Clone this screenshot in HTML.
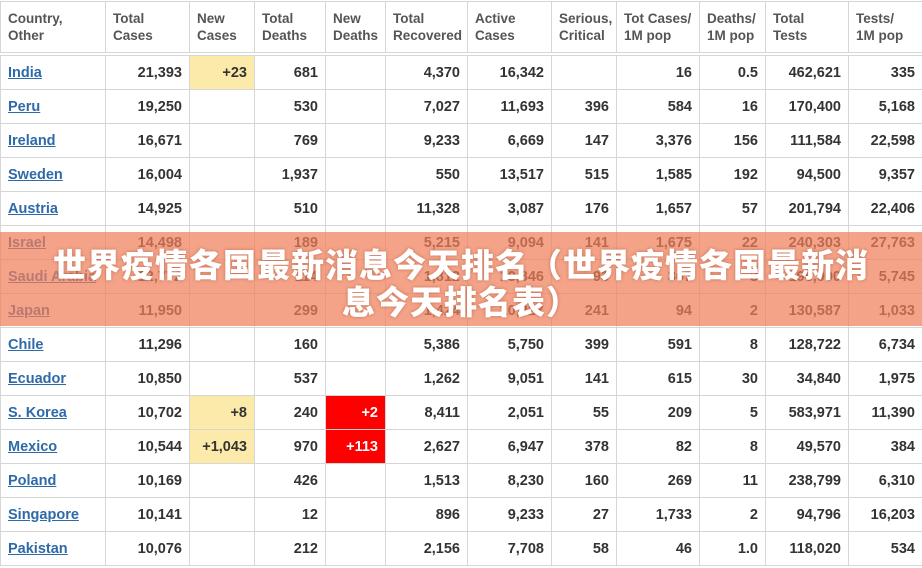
<!DOCTYPE html><html><head><meta charset="utf-8"><style>
body{margin:0;width:922px;height:568px;overflow:hidden;background:#fff;font-family:"Liberation Sans",sans-serif;position:relative}
table{position:absolute;left:0;top:1px;border-collapse:collapse;table-layout:fixed;width:922px}
td{border:1px solid #d6d6d6;height:33px;padding:0 7px 0 0;text-align:right;font-size:14.5px;font-weight:bold;color:#333;white-space:nowrap;overflow:hidden}
td:first-child{text-align:left;padding-left:7px}
tr.h td{height:50px;text-align:left;padding-left:7px;vertical-align:middle;font-size:13.5px;color:#555;line-height:17px;border-bottom:4px double #d6d6d6}
a{color:#2e6aa8;text-decoration:underline}
.y{background:#fbeaa9}.r{background:#f00;color:#fff}
.ban{position:absolute;left:0;top:232px;width:922px;height:94px;background:rgba(240,128,90,0.72);color:#fff;font-family:"Liberation Sans","Noto Sans CJK SC",sans-serif;font-weight:900;font-size:33px;letter-spacing:1px;text-align:center;line-height:37px;padding-top:15px;box-sizing:border-box;text-shadow:0 0 3px rgba(150,60,30,.5);white-space:nowrap}
</style></head><body>
<table>
<colgroup><col style="width:105px"><col style="width:84px"><col style="width:65px"><col style="width:71px"><col style="width:60px"><col style="width:82px"><col style="width:84px"><col style="width:65px"><col style="width:83px"><col style="width:66px"><col style="width:83px"><col style="width:74px"></colgroup>
<tr class="h"><td>Country,<br>Other</td><td>Total<br>Cases</td><td>New<br>Cases</td><td>Total<br>Deaths</td><td>New<br>Deaths</td><td>Total<br>Recovered</td><td>Active<br>Cases</td><td>Serious,<br>Critical</td><td>Tot Cases/<br>1M pop</td><td>Deaths/<br>1M pop</td><td>Total<br>Tests</td><td>Tests/<br>1M pop</td></tr>
<tr><td><a>India</a></td><td>21,393</td><td class="y">+23</td><td>681</td><td></td><td>4,370</td><td>16,342</td><td></td><td>16</td><td>0.5</td><td>462,621</td><td>335</td></tr>
<tr><td><a>Peru</a></td><td>19,250</td><td></td><td>530</td><td></td><td>7,027</td><td>11,693</td><td>396</td><td>584</td><td>16</td><td>170,400</td><td>5,168</td></tr>
<tr><td><a>Ireland</a></td><td>16,671</td><td></td><td>769</td><td></td><td>9,233</td><td>6,669</td><td>147</td><td>3,376</td><td>156</td><td>111,584</td><td>22,598</td></tr>
<tr><td><a>Sweden</a></td><td>16,004</td><td></td><td>1,937</td><td></td><td>550</td><td>13,517</td><td>515</td><td>1,585</td><td>192</td><td>94,500</td><td>9,357</td></tr>
<tr><td><a>Austria</a></td><td>14,925</td><td></td><td>510</td><td></td><td>11,328</td><td>3,087</td><td>176</td><td>1,657</td><td>57</td><td>201,794</td><td>22,406</td></tr>
<tr><td><a>Israel</a></td><td>14,498</td><td></td><td>189</td><td></td><td>5,215</td><td>9,094</td><td>141</td><td>1,675</td><td>22</td><td>240,303</td><td>27,763</td></tr>
<tr><td><a>Saudi Arabia</a></td><td>12,772</td><td></td><td>114</td><td></td><td>1,812</td><td>10,846</td><td>93</td><td>367</td><td>3</td><td>196,000</td><td>5,745</td></tr>
<tr><td><a>Japan</a></td><td>11,950</td><td></td><td>299</td><td></td><td>1,424</td><td>10,227</td><td>241</td><td>94</td><td>2</td><td>130,587</td><td>1,033</td></tr>
<tr><td><a>Chile</a></td><td>11,296</td><td></td><td>160</td><td></td><td>5,386</td><td>5,750</td><td>399</td><td>591</td><td>8</td><td>128,722</td><td>6,734</td></tr>
<tr><td><a>Ecuador</a></td><td>10,850</td><td></td><td>537</td><td></td><td>1,262</td><td>9,051</td><td>141</td><td>615</td><td>30</td><td>34,840</td><td>1,975</td></tr>
<tr><td><a>S. Korea</a></td><td>10,702</td><td class="y">+8</td><td>240</td><td class="r">+2</td><td>8,411</td><td>2,051</td><td>55</td><td>209</td><td>5</td><td>583,971</td><td>11,390</td></tr>
<tr><td><a>Mexico</a></td><td>10,544</td><td class="y">+1,043</td><td>970</td><td class="r">+113</td><td>2,627</td><td>6,947</td><td>378</td><td>82</td><td>8</td><td>49,570</td><td>384</td></tr>
<tr><td><a>Poland</a></td><td>10,169</td><td></td><td>426</td><td></td><td>1,513</td><td>8,230</td><td>160</td><td>269</td><td>11</td><td>238,799</td><td>6,310</td></tr>
<tr><td><a>Singapore</a></td><td>10,141</td><td></td><td>12</td><td></td><td>896</td><td>9,233</td><td>27</td><td>1,733</td><td>2</td><td>94,796</td><td>16,203</td></tr>
<tr><td><a>Pakistan</a></td><td>10,076</td><td></td><td>212</td><td></td><td>2,156</td><td>7,708</td><td>58</td><td>46</td><td>1.0</td><td>118,020</td><td>534</td></tr>
</table>
<div class="ban">世界疫情各国最新消息今天排名（世界疫情各国最新消<br>息今天排名表）</div>
</body></html>
